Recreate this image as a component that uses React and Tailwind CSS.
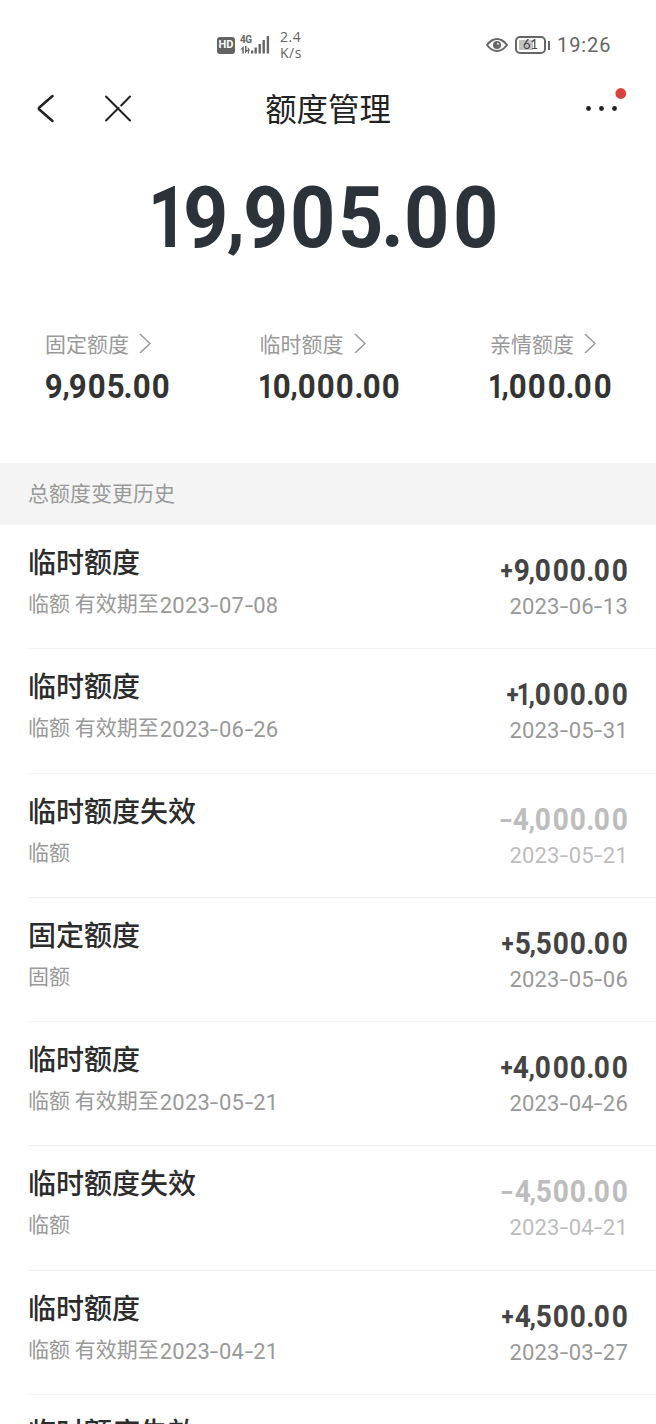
import React from "react";

const limits = [
  { name: "固定额度", value: "9,905.00" },
  { name: "临时额度", value: "10,000.00" },
  { name: "亲情额度", value: "1,000.00" },
];

const history = [
  { title: "临时额度", note: "临额 有效期至", until: "2023-07-08", amount: "+9,000.00", date: "2023-06-13" },
  { title: "临时额度", note: "临额 有效期至", until: "2023-06-26", amount: "+1,000.00", date: "2023-05-31" },
  { title: "临时额度失效", note: "临额", amount: "-4,000.00", date: "2023-05-21", expired: true },
  { title: "固定额度", note: "固额", amount: "+5,500.00", date: "2023-05-06" },
  { title: "临时额度", note: "临额 有效期至", until: "2023-05-21", amount: "+4,000.00", date: "2023-04-26" },
  { title: "临时额度失效", note: "临额", amount: "-4,500.00", date: "2023-04-21", expired: true },
  { title: "临时额度", note: "临额 有效期至", until: "2023-04-21", amount: "+4,500.00", date: "2023-03-27" },
  { title: "临时额度失效" },
];

// cell width of each character in an amount
const cells = {
  0: "w-[0.572em]",
  1: "w-[0.36em]",
  4: "w-[0.55em]",
  ",": "w-[0.16em]",
  ".": "w-[0.21em]",
  "+": "w-[0.42em]",
  "-": "w-[0.44em]",
};

const glyphs = {
  1: "scale-x-[0.8]",
  ",": "scale-[0.87]",
  "+": "text-[0.78em] scale-x-[0.9] [-webkit-text-stroke:0.3px]",
  "-": "scale-x-[1.25] scale-y-[0.9]",
};

const Amount = ({ value }) => (
  <div className="flex">
    {value.split("").map((c, i) => (
      <span key={i} className={`flex items-center justify-center ${cells[c] || "w-[0.535em]"}`}>
        <span className={glyphs[c] || "scale-x-[0.92]"}>{c}</span>
      </span>
    ))}
  </div>
);

const DateText = ({ value }) => (
  <span className="inline-flex font-['Roboto'] text-[22px] tracking-[0.2px]">
    {value.split("").map((c, i) => (
      <span key={i} className={c === "-" ? "flex w-[9px] justify-center" : ""}>
        <span className={c === "-" ? "scale-x-[1.4]" : ""}>{c}</span>
      </span>
    ))}
  </span>
);

const StatusBar = () => (
  <div className="flex h-[74px] shrink-0 items-center pt-4 pl-[217px] pr-[46px] text-[#666]">
    <div className="flex h-[17px] w-[18px] items-center justify-center rounded-[3px] bg-[#636363] font-['Roboto'] text-[11px] font-bold text-white">
      HD
    </div>
    <div className="relative ml-[5px] h-5 w-[31px]">
      <span className="absolute left-0 top-0 font-['Roboto'] text-[10px] font-bold leading-[10px] tracking-[-0.6px]">
        4G
      </span>
      <svg className="h-5 w-[31px]" viewBox="0 0 31 20" fill="currentColor">
        <path d="M3.800 11v7.500H2.300V14.500H.3zM5 11h1.500v4h2l-3.500 3.500zM7.800 12l2.500 3.500H9v3H7.800z" />
        <path d="M11 15.500h2.300v3H11zM14.500 12.500h2.400v6h-2.400zM18.500 9h2.400v9.500h-2.400zM22.500 5h2.400v13.500h-2.400zM26.700 1h2.400v17.500h-2.400z" />
      </svg>
    </div>
    <div className="ml-[9px] font-['Open_Sans'] text-[14px] leading-[16px] tracking-[0.5px]">
      <div>2.4</div>
      <div>K/s</div>
    </div>
    <div className="ml-auto flex items-center">
      <svg className="h-5 w-[22px]" viewBox="0 0 22 20" fill="none" stroke="currentColor" strokeWidth="2">
        <path d="M1 10Q5.500 4 11 4T21 10Q16.500 16 11 16T1 10Z" />
        <circle cx="11" cy="10" r="4" fill="currentColor" stroke="none" />
        <circle cx="12" cy="8.800" r="1.100" fill="#ddd" stroke="none" />
      </svg>
      <div className="relative ml-[7px] flex h-[18px] w-[31px] items-center justify-center rounded-[5px] border-2 border-[#666] font-['Lato'] text-[13px]">
        <div className="absolute left-[2px] top-[2px] h-[10px] w-[14px] bg-[#c2c2c2]" />
        <span className="relative text-[#444]">61</span>
      </div>
      <div className="ml-[2px] h-[9px] w-[2px] bg-[#666]" />
      <span className="ml-[7px] w-[53px] whitespace-nowrap font-['Roboto'] text-[20px] leading-5 tracking-[0.9px]">
        19:26
      </span>
    </div>
  </div>
);

const NavBar = () => (
  <div className="relative flex h-[70px] shrink-0 items-center justify-center text-[#222]">
    <div className="absolute left-[36px] top-[20px] flex items-center gap-[50px]">
      <svg className="h-[30px] w-[19px]" viewBox="0 0 19 30" fill="none" stroke="currentColor" strokeWidth="2.500" strokeLinecap="round" strokeLinejoin="round">
        <path d="M16.500 2 3.300 13.500Q2.300 14.500 3.300 15.500L16.500 27" />
      </svg>
      <svg className="h-[30px] w-[26px]" viewBox="0 0 26 30" fill="none" stroke="currentColor" strokeWidth="2" strokeLinecap="round">
        <path d="M1 2.500 25 26.500M25 2.500 16.200 11.500M13.500 14 1 26.500" />
      </svg>
    </div>
    <h1 className="-mt-[2px] text-[31.4px] leading-[32px]">额度管理</h1>
    <svg className="absolute left-[584px] top-[12px] h-[28px] w-[44px]" viewBox="0 0 44 28" fill="currentColor">
      <circle cx="4.500" cy="22.500" r="2.400" />
      <circle cx="17.500" cy="22.500" r="2.400" />
      <circle cx="30.500" cy="22.500" r="2.400" />
      <circle cx="36.800" cy="7.500" r="5.400" fill="#d9423c" />
    </svg>
  </div>
);

const Limit = ({ item }) => (
  <div>
    <div className="flex items-center text-[21px] leading-6 text-[#999]">
      {item.name}
      <svg className="ml-[10px] h-5 w-3" viewBox="0 0 12 20" fill="none" stroke="currentColor" strokeWidth="1.500">
        <path d="M1 1 11 10.500 1 20" />
      </svg>
    </div>
    <div className="mt-[13px] font-['Roboto'] text-[34px] font-bold leading-9 text-[#333]">
      <Amount value={item.value} />
    </div>
  </div>
);

const HistoryRow = ({ item }) => (
  <div className="ml-[28px] flex h-[124.250px] shrink-0 justify-between border-b border-[#f3f3f3] pr-[28px]">
    <div className="pt-[20px]">
      <div className="text-[28px] font-medium leading-8 text-[#2c2c2c]">{item.title}</div>
      {item.note && (
        <div className="mt-[13px] flex text-[21px] leading-6 text-[#999]">
          <span className="whitespace-pre">{item.note}</span>
          {item.until && (
            <div className="ml-px pt-[2px]">
              <DateText value={item.until} />
            </div>
          )}
        </div>
      )}
    </div>
    {item.amount && (
      <div className={`flex flex-col items-end pt-[30px] ${item.expired ? "text-[#bdbdbd]" : "text-[#444]"}`}>
        <div className="h-8 font-['Roboto'] text-[30.500px] font-bold leading-8">
          <Amount value={item.amount} />
        </div>
        <div className={`mt-[8px] leading-6 ${item.expired ? "text-[#bdbdbd]" : "text-[#999]"}`}>
          <DateText value={item.date} />
        </div>
      </div>
    )}
  </div>
);

const App = () => {
  return (
    <div className="flex h-[1424px] w-[656px] flex-col overflow-hidden bg-white font-['Noto_Sans_CJK_SC',sans-serif]">
      <StatusBar />
      <NavBar />

      {/* Total limit */}
      <div className="mt-[24px] flex shrink-0 justify-center pr-[4px] font-['Roboto'] text-[86px] font-bold leading-[100px] text-[#2b323a]">
        <Amount value="19,905.00" />
      </div>

      {/* Limit breakdown */}
      <div className="mt-[63px] flex h-[132px] shrink-0 justify-between pl-[45px] pr-[44px]">
        {limits.map((item) => (
          <Limit key={item.name} item={item} />
        ))}
      </div>

      {/* Change history */}
      <div className="flex h-[62px] shrink-0 items-center bg-[#f4f4f4] pb-[3px] pl-[28px] text-[21px] text-[#999]">
        总额度变更历史
      </div>
      {history.map((item, i) => (
        <HistoryRow key={i} item={item} />
      ))}
    </div>
  );
};

export default App;
